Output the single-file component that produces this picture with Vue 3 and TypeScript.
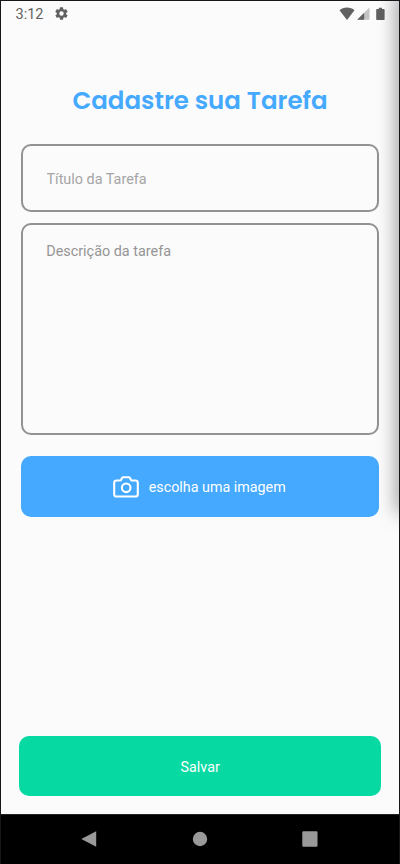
<script setup lang="ts">
import { ref } from 'vue'

const title = ref('')
const description = ref('')
</script>

<template>
  <div class="device">
    <header class="status">
      <span class="clock">3:12</span>
      <svg class="gear" viewBox="0 0 24 24"><path fill="currentColor" fill-rule="evenodd" d="M19.4 13a7 7 0 0 0 0-2l2.1-1.6a.5.5 0 0 0 .1-.7l-2-3.4a.5.5 0 0 0-.6-.2l-2.5 1a7.500 7.500 0 0 0-1.700-1L14.400 2.400a.5.5 0 0 0-.5-.4h-4a.5.5 0 0 0-.5.400L9.100 5.100a7.500 7.500 0 0 0-1.700 1l-2.500-1a.5.5 0 0 0-.6.200l-2 3.400a.5.5 0 0 0 .1.700L4.500 11a7 7 0 0 0 0 2l-2.100 1.600a.5.5 0 0 0-.1.700l2 3.400c.1.200.4.300.6.200l2.500-1a7.500 7.500 0 0 0 1.700 1l.4 2.700c0 .2.200.4.500.4h4c.2 0 .5-.2.500-.4l.4-2.700a7.500 7.500 0 0 0 1.700-1l2.500 1c.2.100.5 0 .6-.2l2-3.400a.5.500 0 0 0-.1-.7zM12 15.500a3.500 3.500 0 1 1 0-7 3.500 3.500 0 0 1 0 7z" /></svg>
      <svg class="signals" viewBox="0 0 48 14">
        <path fill="#616161" d="M.5 3.200C2.500 1.600 5 .6 8 .6s5.500 1 7.500 2.600L8 12.900z" />
        <path fill="#c3c3c3" d="M30.500.5v12.300H18.200z" />
        <path fill="#616161" d="M25.200 5.800v7h-7z" />
        <path fill="#616161" d="M39.800.7h3.200v1.300h1.800q.8 0 .8.800v9.400q0 .8-.8.800H38q-.8 0-.8-.8V2.800q0-.8.800-.8h1.800z" />
      </svg>
    </header>

    <main class="page">
      <h1 class="heading">Cadastre sua Tarefa</h1>
      <input v-model="title" class="field title-field" placeholder="Título da Tarefa">
      <textarea v-model="description" class="field description-field" placeholder="Descrição da tarefa"></textarea>
      <button class="button pick" type="button">
        <svg class="camera" viewBox="0 0 26 22" fill="none" stroke="currentColor" stroke-width="2.1" stroke-linejoin="round">
          <path d="M3.500 4.500h3.700q.6 0 .9-.6l.8-1.700Q9.400 1.300 10.300 1.300h5.400q.9 0 1.400.9l.8 1.700q.3.600.9.600h3.700q2.300 0 2.300 2.300v11.400q0 2.300-2.300 2.300h-19q-2.300 0-2.300-2.300V6.800q0-2.300 2.300-2.300z" />
          <circle cx="13.200" cy="11.800" r="4.300" />
        </svg>
        <span>escolha uma imagem</span>
      </button>
      <button class="button save" type="button">Salvar</button>
    </main>

    <nav class="navigation">
      <svg viewBox="0 0 16 16"><path d="M15.200.3v15.400L.3 8z" /></svg>
      <svg viewBox="0 0 16 16"><circle cx="8" cy="8" r="7.200" /></svg>
      <svg viewBox="0 0 16 16"><rect x=".3" y=".3" width="15.200" height="15.400" rx="1" /></svg>
    </nav>
    <div class="edge-shadow"></div>
  </div>
</template>

<style>
body {
  overflow: hidden;
}
</style>

<style scoped>
.device {
  position: relative;
  box-sizing: border-box;
  display: flex;
  flex-direction: column;
  width: 400px;
  height: 864px;
  overflow: hidden;
  border: 1px solid #18161a;
  border-bottom: 0;
  background: #fbfbfb;
  font-family: Roboto, sans-serif;
}

.status {
  display: flex;
  align-items: center;
  height: 26px;
  padding: 0 12.500px 0 14.500px;
  color: #616161;
}

.clock {
  width: 38.500px;
  padding-top: 1px;
  font-size: 14.500px;
  line-height: 26px;
}

.gear {
  width: 15px;
  height: 15px;
  margin-top: -1px;
}

.signals {
  width: 48px;
  height: 14px;
  margin-top: -1px;
  margin-left: auto;
}

.page {
  display: flex;
  flex: 1;
  flex-direction: column;
  padding: 0 20px;
}

.heading {
  margin: 55px 0 0;
  height: 36px;
  color: #44a9ff;
  font-family: Poppins, Inter, sans-serif;
  font-size: 24.500px;
  font-weight: 600;
  line-height: 37px;
  text-align: center;
  white-space: nowrap;
}

.field {
  box-sizing: border-box;
  display: block;
  width: 100%;
  margin: 0;
  border: 2px solid #929292;
  border-radius: 10px;
  outline: 0;
  background: transparent;
  color: #555;
  font: 14.400px/20px Roboto, sans-serif;
  resize: none;
}

.field::placeholder {
  color: #959595;
  opacity: 1;
}

.title-field {
  height: 68px;
  margin-top: 26px;
  padding: 2px 23.500px 0;
}

.title-field::placeholder {
  color: #a5a5a5;
}

.description-field {
  height: 212px;
  margin-top: 11px;
  padding: 17px 23.200px;
}

.button {
  display: flex;
  flex-shrink: 0;
  align-items: center;
  justify-content: center;
  padding: 0;
  border: 0;
  border-radius: 10px;
  color: #fff;
  font: 14.300px/20px Roboto, sans-serif;
}

.pick {
  gap: 10px;
  height: 61px;
  margin-top: 21px;
  padding-right: 1.500px;
  background: #44a9ff;
}

.pick span {
  padding-top: 1px;
}

.camera {
  width: 26px;
  height: 22px;
}

.save {
  height: 60px;
  margin: auto -2px 18px -1.600px;
  padding-top: 2px;
  background: #07d9a2;
}

.navigation {
  box-sizing: border-box;
  display: flex;
  align-items: center;
  justify-content: space-between;
  height: 50px;
  padding: 0 81px 2px 80px;
  border-top: 1px solid #242424;
  background: #000;
}

.navigation svg {
  width: 16px;
  height: 16px;
  fill: #999;
}

.edge-shadow {
  position: absolute;
  top: -10px;
  right: -10px;
  width: 10px;
  height: 522px;
  box-shadow: 0 0 19px 0 rgb(0 0 0 / 60%);
  pointer-events: none;
}
</style>
